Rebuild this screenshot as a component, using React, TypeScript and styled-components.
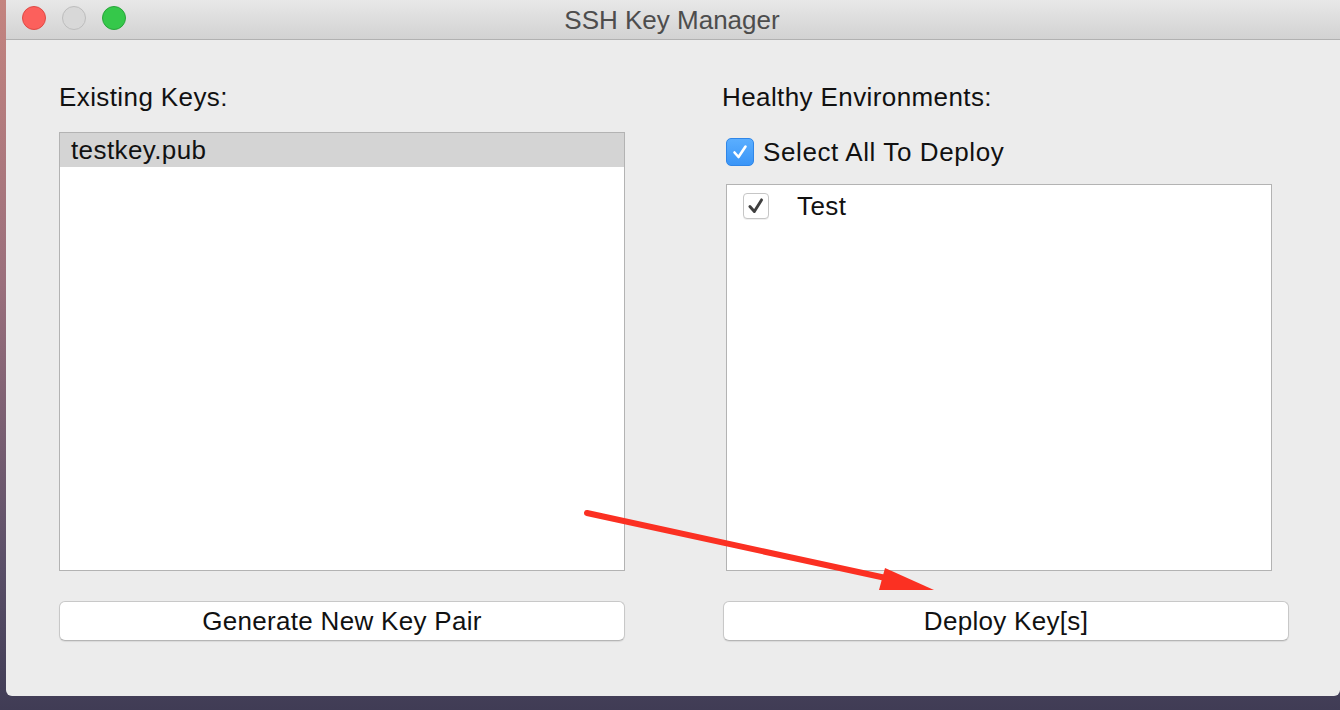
import React from "react";
import styled, { createGlobalStyle } from "styled-components";

const Global = createGlobalStyle`
  html, body {
    margin: 0;
    padding: 0;
    width: 1340px;
    height: 710px;
    overflow: hidden;
    background: linear-gradient(180deg, #c4847f 0%, #9a6f7c 40%, #5a4f68 80%, #403c55 100%);
    font-family: "Liberation Sans", Arial, sans-serif;
  }
  #root { position: relative; width: 1340px; height: 710px; }
`;

const Desktop = styled.div`
  display: flex;
  width: 1340px;
  height: 710px;
  padding-left: 6px;
  box-sizing: border-box;
`;

const Window = styled.div`
  display: flex;
  flex-direction: column;
  width: 1334px;
  height: 696px;
  background: #ececec;
  border-radius: 0 0 6px 6px;
  overflow: hidden;
`;

const TitleBar = styled.div`
  position: relative;
  display: flex;
  align-items: center;
  justify-content: center;
  height: 39px;
  flex-shrink: 0;
  background: linear-gradient(180deg, #e8e8e8 0%, #d2d2d2 100%);
  border-bottom: 1px solid #b1b1b1;
`;

const Lights = styled.div`
  position: absolute;
  left: 16px;
  top: 6px;
  display: flex;
  gap: 16px;
`;

const Light = styled.span<{ $bg: string; $border: string }>`
  width: 22px;
  height: 22px;
  border-radius: 50%;
  background: ${(p) => p.$bg};
  border: 1px solid ${(p) => p.$border};
`;

const Title = styled.div`
  font-size: 26px;
  color: #4d4d4d;
  line-height: 30px;
  margin-left: -2px;
`;

const Content = styled.div`
  display: grid;
  grid-template-columns: 566px 567px;
  column-gap: 97px;
  padding: 42px 51px 55px 53px;
  flex: 1;
  min-height: 0;
  letter-spacing: 0.4px;
`;

const Column = styled.div`
  display: flex;
  flex-direction: column;
  min-height: 0;
`;

const Label = styled.div`
  font-size: 26px;
  line-height: 30px;
  height: 30px;
  color: #111;
`;

const ListBox = styled.div<{ $mt: number; $ml?: number; $w?: number }>`
  flex: 1;
  margin-top: ${(p) => p.$mt}px;
  margin-left: ${(p) => p.$ml ?? 0}px;
  width: ${(p) => (p.$w ? `${p.$w}px` : "auto")};
  background: #fff;
  border: 1px solid #b3b3b3;
  box-sizing: border-box;
  display: flex;
  flex-direction: column;
`;

const KeyRow = styled.div<{ $selected?: boolean }>`
  height: 34px;
  line-height: 34px;
  padding-left: 11px;
  font-size: 26px;
  color: #111;
  background: ${(p) => (p.$selected ? "#d4d4d4" : "transparent")};
`;

const SelectAllRow = styled.label`
  display: flex;
  align-items: center;
  gap: 9px;
  height: 28px;
  margin-top: 26px;
  margin-left: 4px;
  font-size: 26px;
  letter-spacing: 0.6px;
  color: #111;
`;

const BlueBox = styled.span`
  display: flex;
  align-items: center;
  justify-content: center;
  width: 28px;
  height: 28px;
  border-radius: 5px;
  background: linear-gradient(180deg, #5aaeff 0%, #3a95f7 100%);
  box-sizing: border-box;
  border: 1px solid #2f86e8;
`;

const EnvRow = styled.div`
  display: flex;
  align-items: center;
  gap: 28px;
  height: 26px;
  margin-top: 8px;
  padding-left: 16px;
  font-size: 26px;
  color: #111;
`;

const PlainBox = styled.span`
  display: flex;
  align-items: center;
  justify-content: center;
  width: 26px;
  height: 26px;
  border-radius: 4px;
  background: #fff;
  box-sizing: border-box;
  border: 1px solid #c6c6c6;
  box-shadow: 0 1px 0 rgba(0, 0, 0, 0.06);
`;

const Button = styled.button<{ $ml?: number }>`
  margin-top: 30px;
  margin-left: ${(p) => p.$ml ?? 0}px;
  height: 40px;
  flex-shrink: 0;
  background: #fff;
  border: 1px solid #c8c8c8;
  border-bottom-color: #b5b5b5;
  border-radius: 6px;
  box-shadow: 0 1px 1px rgba(0, 0, 0, 0.08);
  font-family: "Liberation Sans", Arial, sans-serif;
  font-size: 26px;
  letter-spacing: 0.3px;
  color: #111;
  padding: 0;
`;

const Overlay = styled.svg`
  position: absolute;
  left: 0;
  top: 0;
  width: 1340px;
  height: 710px;
  pointer-events: none;
`;

export default function App() {
  return (
    <>
      <Global />
      <Desktop>
        <Window>
          <TitleBar>
            <Lights>
              <Light $bg="#fc605c" $border="#de4a45" />
              <Light $bg="#d8d8d8" $border="#bdbdbd" />
              <Light $bg="#35c84a" $border="#28a53a" />
            </Lights>
            <Title>SSH Key Manager</Title>
          </TitleBar>
          <Content>
            <Column>
              <Label>Existing Keys:</Label>
              <ListBox $mt={20}>
                <KeyRow $selected>testkey.pub</KeyRow>
              </ListBox>
              <Button>Generate New Key Pair</Button>
            </Column>
            <Column>
              <Label>Healthy Environments:</Label>
              <SelectAllRow>
                <BlueBox>
                  <svg width="18" height="18" viewBox="0 0 18 18">
                    <polyline points="3.5,9.5 7.5,14 14.5,3.5" fill="none" stroke="#fff" strokeWidth="2.6" strokeLinecap="round" strokeLinejoin="round" />
                  </svg>
                </BlueBox>
                Select All To Deploy
              </SelectAllRow>
              <ListBox $mt={18} $ml={4} $w={546}>
                <EnvRow>
                  <PlainBox>
                    <svg width="20" height="20" viewBox="0 0 18 18">
                      <polyline points="3.5,9.5 7.5,14 14,3.5" fill="none" stroke="#3f3f3f" strokeWidth="2.6" strokeLinecap="round" strokeLinejoin="round" />
                    </svg>
                  </PlainBox>
                  Test
                </EnvRow>
              </ListBox>
              <Button $ml={1}>Deploy Key[s]</Button>
            </Column>
          </Content>
        </Window>
      </Desktop>
      <Overlay viewBox="0 0 1340 710">
        <line x1="587" y1="513" x2="895" y2="580" stroke="#fb3022" strokeWidth="6" strokeLinecap="round" />
        <polygon points="885,568 879,590 934,590" fill="#fb3022" />
      </Overlay>
    </>
  );
}
